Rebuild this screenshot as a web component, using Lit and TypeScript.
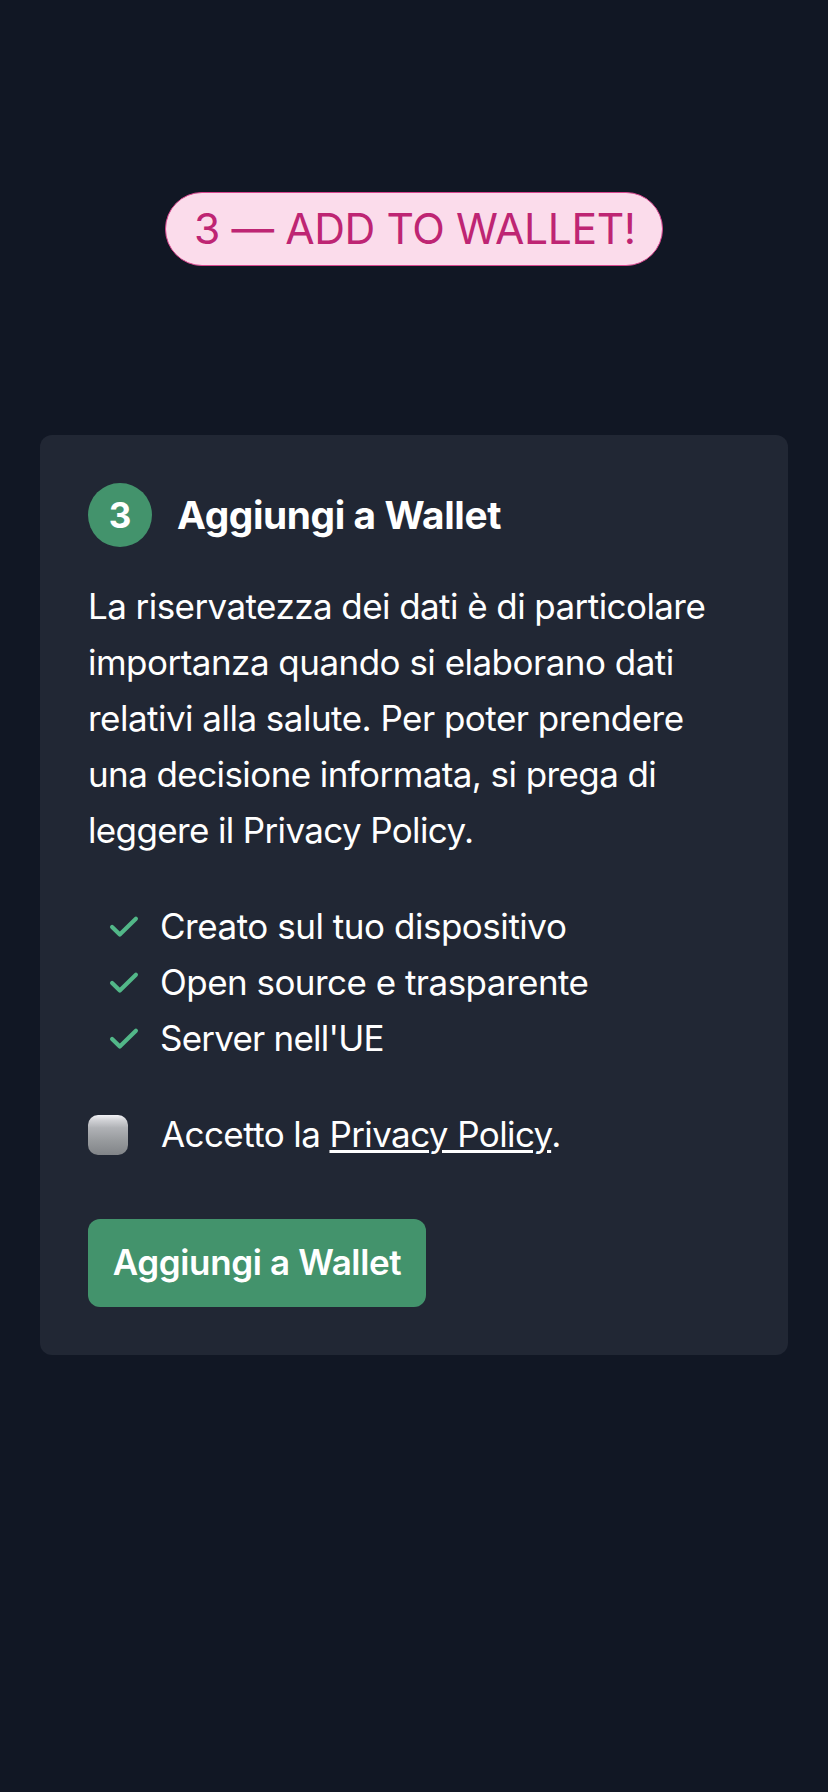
import { LitElement, html, css } from "lit";
import { customElement } from "lit/decorators.js";
import { styleMap } from "lit/directives/style-map.js";

type Line = [text: string, tracking: number];

@customElement("app-root")
export class AppRoot extends LitElement {
  static styles = css`
    :host {
      display: block;
      box-sizing: border-box;
      min-height: 1792px;
      padding: 192px 40px 0;
      background: #111724;
      color: #fff;
      font: 400 35px/56px Inter, "Liberation Sans", sans-serif;
      letter-spacing: -0.6px;
      white-space: nowrap;
    }
    .pill {
      box-sizing: border-box;
      width: 498px;
      height: 74px;
      margin: 0 auto 169px;
      padding-left: 28px;
      border: 1px solid #d8468f;
      border-radius: 37px;
      background: #fbdceb;
      color: #be2573;
      font-size: 42.6px;
      line-height: 72px;
      letter-spacing: -0.41px;
    }
    .card {
      box-sizing: border-box;
      height: 920px;
      padding: 48px;
      border-radius: 12px;
      background: #212734;
    }
    .head {
      display: flex;
      align-items: center;
      gap: 25px;
      height: 64px;
      margin-bottom: 31px;
    }
    .step {
      width: 64px;
      height: 64px;
      border-radius: 50%;
      background: #43936c;
      font-weight: 700;
      line-height: 64px;
      text-align: center;
      letter-spacing: 0;
    }
    h2 {
      margin: 0;
      font-size: 38.8px;
      font-weight: 700;
      letter-spacing: -0.4px;
    }
    p {
      margin: 0 0 40px;
    }
    .line {
      display: block;
    }
    ul {
      list-style: none;
      margin: 0 0 40px;
      padding: 0 0 0 16px;
    }
    li {
      display: flex;
      align-items: center;
      gap: 16px;
    }
    .check {
      width: 40px;
      height: 40px;
      fill: none;
      stroke: #52b788;
      stroke-width: 4.2;
      stroke-linecap: round;
      stroke-linejoin: round;
    }
    .consent {
      display: flex;
      align-items: center;
      gap: 33px;
      height: 56px;
      margin-bottom: 57px;
    }
    .box {
      width: 40px;
      height: 40px;
      margin-top: 2px;
      border-radius: 10px;
      background: linear-gradient(#f2f2f6 0%, #cfd0d4 14%, #b0b2b6 32%, #96999c 66%, #818488 100%);
    }
    a {
      color: inherit;
      text-decoration: underline;
      text-decoration-thickness: 2.5px;
      text-underline-offset: 3px;
    }
    button {
      display: block;
      width: 338px;
      height: 88px;
      padding: 0 0 2px;
      border: 0;
      border-radius: 12px;
      background: #43936c;
      color: #fff;
      font: inherit;
      font-weight: 600;
      letter-spacing: -0.36px;
    }
  `;

  private lines: Line[] = [
    ["La riservatezza dei dati è di particolare", -0.57],
    ["importanza quando si elaborano dati", -0.52],
    ["relativi alla salute. Per poter prendere", -0.52],
    ["una decisione informata, si prega di", -0.59],
    ["leggere il Privacy Policy.", -0.64],
  ];

  private features: Line[] = [
    ["Creato sul tuo dispositivo", -0.47],
    ["Open source e trasparente", -0.53],
    ["Server nell'UE", -0.78],
  ];

  private line([text, tracking]: Line) {
    return html`<span class="line" style=${styleMap({ letterSpacing: `${tracking}px` })}>${text}</span>`;
  }

  render() {
    return html`
      <div class="pill">3 — ADD TO WALLET!</div>
      <section class="card">
        <div class="head">
          <div class="step">3</div>
          <h2>Aggiungi a Wallet</h2>
        </div>
        <p>${this.lines.map((l) => this.line(l))}</p>
        <ul>
          ${this.features.map(
            (l) => html`<li>
              <svg class="check" viewBox="0 0 40 40"><path d="M8.1 21 L15.8 28.5 L31.9 12.8" /></svg>
              ${this.line(l)}
            </li>`
          )}
        </ul>
        <div class="consent">
          <div class="box" role="checkbox" aria-checked="false"></div>
          <span>Accetto la <a>Privacy Policy</a>.</span>
        </div>
        <button>Aggiungi a Wallet</button>
      </section>
    `;
  }
}
